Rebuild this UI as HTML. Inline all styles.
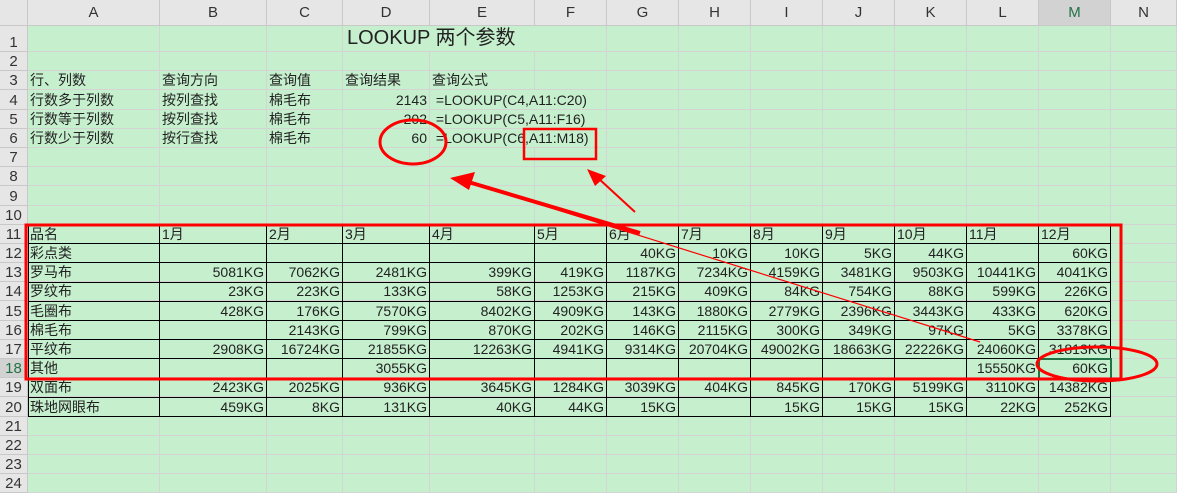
<!DOCTYPE html>
<html><head><meta charset="utf-8"><style>
body{margin:0;width:1177px;height:488px;overflow:hidden;background:#c6efce;font-family:"Liberation Sans","Noto Sans CJK SC",sans-serif;}
table{position:absolute;left:0;top:0;border-collapse:separate;border-spacing:0;table-layout:fixed;width:1177px}
td{border-right:1px solid #d4d4d4;border-bottom:1px solid #d4d4d4;padding:0 2px;font-size:14px;color:#222;white-space:nowrap;overflow:visible;vertical-align:bottom;box-sizing:border-box;line-height:17px}
tr{height:19.2px}
tr.h td{background:#e6e6e6;text-align:center;vertical-align:middle;font-size:15px;color:#333;border-color:#c8c8c8;height:26px}
td.rh{background:#e6e6e6;text-align:center;font-size:15px;color:#333;border-color:#c8c8c8;padding:0}
td.r{text-align:right}
tr.t td{height:26px}
.sel{background:#d2d2d2!important;color:#217346!important}
svg{position:absolute;left:0;top:0}
</style></head><body>
<table>
<colgroup><col style="width:28px"><col style="width:132px"><col style="width:107px"><col style="width:76px"><col style="width:87px"><col style="width:105px"><col style="width:72px"><col style="width:72px"><col style="width:72px"><col style="width:72px"><col style="width:72px"><col style="width:72px"><col style="width:72px"><col style="width:72px"><col style="width:66px"></colgroup>
<tr class="h"><td></td><td>A</td><td>B</td><td>C</td><td>D</td><td>E</td><td>F</td><td>G</td><td>H</td><td>I</td><td>J</td><td>K</td><td>L</td><td class="sel">M</td><td>N</td></tr>
<tr class="t"><td class="rh">1</td><td></td><td></td><td></td><td colspan="3" style="font-size:20px;padding-left:4px;vertical-align:middle">LOOKUP 两个参数</td><td></td><td></td><td></td><td></td><td></td><td></td><td></td><td></td></tr>
<tr><td class="rh">2</td><td></td><td></td><td></td><td></td><td></td><td></td><td></td><td></td><td></td><td></td><td></td><td></td><td></td><td></td></tr>
<tr><td class="rh">3</td><td>行、列数</td><td>查询方向</td><td>查询值</td><td>查询结果</td><td>查询公式</td><td></td><td></td><td></td><td></td><td></td><td></td><td></td><td></td><td></td></tr>
<tr><td class="rh">4</td><td>行数多于列数</td><td>按列查找</td><td>棉毛布</td><td class="r">2143</td><td colspan="2">&nbsp;=LOOKUP(C4,A11:C20)</td><td></td><td></td><td></td><td></td><td></td><td></td><td></td><td></td></tr>
<tr><td class="rh">5</td><td>行数等于列数</td><td>按列查找</td><td>棉毛布</td><td class="r">202</td><td colspan="2">&nbsp;=LOOKUP(C5,A11:F16)</td><td></td><td></td><td></td><td></td><td></td><td></td><td></td><td></td></tr>
<tr><td class="rh">6</td><td>行数少于列数</td><td>按行查找</td><td>棉毛布</td><td class="r">60</td><td colspan="2">&nbsp;=LOOKUP(C6,A11:M18)</td><td></td><td></td><td></td><td></td><td></td><td></td><td></td><td></td></tr>
<tr><td class="rh">7</td><td></td><td></td><td></td><td></td><td></td><td></td><td></td><td></td><td></td><td></td><td></td><td></td><td></td><td></td></tr>
<tr><td class="rh">8</td><td></td><td></td><td></td><td></td><td></td><td></td><td></td><td></td><td></td><td></td><td></td><td></td><td></td><td></td></tr>
<tr><td class="rh">9</td><td></td><td></td><td></td><td></td><td></td><td></td><td></td><td></td><td></td><td></td><td></td><td></td><td></td><td></td></tr>
<tr><td class="rh">10</td><td></td><td></td><td></td><td></td><td></td><td></td><td></td><td></td><td></td><td></td><td></td><td></td><td></td><td></td></tr>
<tr><td class="rh">11</td><td>品名</td><td>1月</td><td>2月</td><td>3月</td><td>4月</td><td>5月</td><td>6月</td><td>7月</td><td>8月</td><td>9月</td><td>10月</td><td>11月</td><td>12月</td><td></td></tr>
<tr><td class="rh">12</td><td>彩点类</td><td></td><td></td><td></td><td></td><td></td><td class="r">40KG</td><td class="r">10KG</td><td class="r">10KG</td><td class="r">5KG</td><td class="r">44KG</td><td></td><td class="r">60KG</td><td></td></tr>
<tr><td class="rh">13</td><td>罗马布</td><td class="r">5081KG</td><td class="r">7062KG</td><td class="r">2481KG</td><td class="r">399KG</td><td class="r">419KG</td><td class="r">1187KG</td><td class="r">7234KG</td><td class="r">4159KG</td><td class="r">3481KG</td><td class="r">9503KG</td><td class="r">10441KG</td><td class="r">4041KG</td><td></td></tr>
<tr><td class="rh">14</td><td>罗纹布</td><td class="r">23KG</td><td class="r">223KG</td><td class="r">133KG</td><td class="r">58KG</td><td class="r">1253KG</td><td class="r">215KG</td><td class="r">409KG</td><td class="r">84KG</td><td class="r">754KG</td><td class="r">88KG</td><td class="r">599KG</td><td class="r">226KG</td><td></td></tr>
<tr><td class="rh">15</td><td>毛圈布</td><td class="r">428KG</td><td class="r">176KG</td><td class="r">7570KG</td><td class="r">8402KG</td><td class="r">4909KG</td><td class="r">143KG</td><td class="r">1880KG</td><td class="r">2779KG</td><td class="r">2396KG</td><td class="r">3443KG</td><td class="r">433KG</td><td class="r">620KG</td><td></td></tr>
<tr><td class="rh">16</td><td>棉毛布</td><td></td><td class="r">2143KG</td><td class="r">799KG</td><td class="r">870KG</td><td class="r">202KG</td><td class="r">146KG</td><td class="r">2115KG</td><td class="r">300KG</td><td class="r">349KG</td><td class="r">97KG</td><td class="r">5KG</td><td class="r">3378KG</td><td></td></tr>
<tr><td class="rh">17</td><td>平纹布</td><td class="r">2908KG</td><td class="r">16724KG</td><td class="r">21855KG</td><td class="r">12263KG</td><td class="r">4941KG</td><td class="r">9314KG</td><td class="r">20704KG</td><td class="r">49002KG</td><td class="r">18663KG</td><td class="r">22226KG</td><td class="r">24060KG</td><td class="r">31813KG</td><td></td></tr>
<tr><td class="rh sel">18</td><td>其他</td><td></td><td></td><td class="r">3055KG</td><td></td><td></td><td></td><td></td><td></td><td></td><td></td><td class="r">15550KG</td><td class="r">60KG</td><td></td></tr>
<tr><td class="rh">19</td><td>双面布</td><td class="r">2423KG</td><td class="r">2025KG</td><td class="r">936KG</td><td class="r">3645KG</td><td class="r">1284KG</td><td class="r">3039KG</td><td class="r">404KG</td><td class="r">845KG</td><td class="r">170KG</td><td class="r">5199KG</td><td class="r">3110KG</td><td class="r">14382KG</td><td></td></tr>
<tr><td class="rh">20</td><td>珠地网眼布</td><td class="r">459KG</td><td class="r">8KG</td><td class="r">131KG</td><td class="r">40KG</td><td class="r">44KG</td><td class="r">15KG</td><td></td><td class="r">15KG</td><td class="r">15KG</td><td class="r">15KG</td><td class="r">22KG</td><td class="r">252KG</td><td></td></tr>
<tr><td class="rh">21</td><td></td><td></td><td></td><td></td><td></td><td></td><td></td><td></td><td></td><td></td><td></td><td></td><td></td><td></td></tr>
<tr><td class="rh">22</td><td></td><td></td><td></td><td></td><td></td><td></td><td></td><td></td><td></td><td></td><td></td><td></td><td></td><td></td></tr>
<tr><td class="rh">23</td><td></td><td></td><td></td><td></td><td></td><td></td><td></td><td></td><td></td><td></td><td></td><td></td><td></td><td></td></tr>
<tr><td class="rh">24</td><td></td><td></td><td></td><td></td><td></td><td></td><td></td><td></td><td></td><td></td><td></td><td></td><td></td><td></td></tr>
</table>
<svg width="1177" height="488" viewBox="0 0 1177 488">
<g stroke="#000" stroke-width="1" fill="none" shape-rendering="crispEdges">
<path d="M28.5 224.5V416.5M159.5 224.5V416.5M266.5 224.5V416.5M342.5 224.5V416.5M429.5 224.5V416.5M534.5 224.5V416.5M606.5 224.5V416.5M678.5 224.5V416.5M750.5 224.5V416.5M822.5 224.5V416.5M894.5 224.5V416.5M966.5 224.5V416.5M1038.5 224.5V416.5M1110.5 224.5V416.5"/>
<path d="M28 224.5H1111M28 243.5H1111M28 262.5H1111M28 282.5H1111M28 301.5H1111M28 320.5H1111M28 339.5H1111M28 358.5H1111M28 378.5H1111M28 397.5H1111M28 416.5H1111"/>
</g>
<rect x="1039" y="359" width="72" height="20" fill="none" stroke="#217346" stroke-width="2"/>
<g stroke="#f00" fill="none">
<rect x="26" y="225" width="1095" height="154" stroke-width="3"/>
<ellipse cx="413" cy="142" rx="33" ry="22" stroke-width="3"/>
<rect x="524" y="129" width="72" height="30" stroke-width="2.5"/>
<ellipse cx="1097" cy="364" rx="60" ry="17" stroke-width="3"/>
<line x1="465" y1="181" x2="980" y2="342" stroke-width="1.2"/>
<line x1="465" y1="181" x2="640" y2="233" stroke-width="4"/>
<line x1="598" y1="178" x2="635" y2="212" stroke-width="2"/>
</g>
<polygon points="450,178 475,172 469,190" fill="#f00"/>
<polygon points="587,169 606,176 595,186" fill="#f00"/>
</svg>
</body></html>
